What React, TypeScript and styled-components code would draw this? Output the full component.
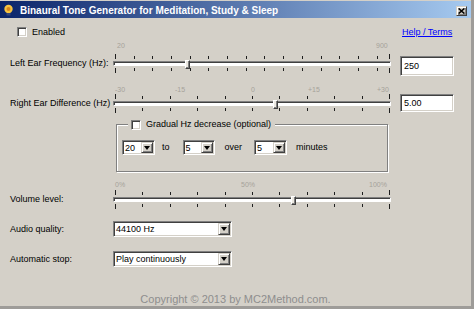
import styled, { createGlobalStyle, css } from "styled-components";

const FACE = "#d4d0c8";

const GlobalStyle = createGlobalStyle`
  html, body {
    margin: 0;
    padding: 0;
  }
  body {
    background: #9e9c99;
    font-family: "Liberation Sans", Arial, sans-serif;
    font-size: 9px;
    color: #000;
  }
  * {
    box-sizing: border-box;
  }
`;

const sunken = css`
  border: 1px solid;
  border-color: #808080 #ffffff #ffffff #808080;
  box-shadow: inset 1px 1px 0 #404040, inset -1px -1px 0 ${FACE};
`;

const raised = css`
  border: 1px solid;
  border-color: ${FACE} #404040 #404040 ${FACE};
  box-shadow: inset 1px 1px 0 #ffffff, inset -1px -1px 0 #808080;
`;

// distance in px between the first and the last tick of every slider
const TICK_SPAN = 274;
const TICK_START = 2;

type ScaleLabel = { text: string; x: number };

type SliderProps = {
  min: number;
  max: number;
  step: number;
  value: number;
  labels: ScaleLabel[];
  gap: number;
};

const Slider = ({ min, max, step, value, labels, gap }: SliderProps) => {
  const pos = (v: number) => TICK_START + ((v - min) / (max - min)) * TICK_SPAN;
  const ticks: number[] = [];
  for (let v = min; v < max - 0.001; v += step) ticks.push(v);
  ticks.push(max);

  return (
    <SliderBox>
      <Scale $gap={gap}>
        {labels.map((l) => (
          <ScaleText key={l.text} style={{ left: l.x }}>
            {l.text}
          </ScaleText>
        ))}
      </Scale>
      <SliderBody>
        {ticks.map((t, i) => (
          <Tick
            key={`top-${i}`}
            $side="top"
            $edge={i === 0 || i === ticks.length - 1}
            style={{ left: Math.round(pos(t)) }}
          />
        ))}
        <Channel />
        {ticks.map((t, i) => (
          <Tick
            key={`bottom-${i}`}
            $side="bottom"
            $edge={i === 0 || i === ticks.length - 1}
            style={{ left: Math.round(pos(t)) }}
          />
        ))}
        <Thumb style={{ left: Math.round(pos(value)) - 2 }} />
      </SliderBody>
    </SliderBox>
  );
};

const Combo = ({
  value,
  width,
  height,
}: {
  value: string;
  width: number;
  height: number;
}) => (
  <ComboBox $width={width} $height={height}>
    <ComboValue>{value}</ComboValue>
    <ComboButton>
      <Arrow />
    </ComboButton>
  </ComboBox>
);

const App = () => {
  return (
    <>
      <GlobalStyle />
      <Window>
        <TitleBar>
          <svg width="11" height="12" viewBox="0 0 11 12">
            <circle cx="5.5" cy="5" r="4.2" fill="#f5c342" />
            <circle cx="5.5" cy="5" r="2" fill="#d9861c" />
            <rect x="3.5" y="9" width="4" height="2.6" rx="0.6" fill="#34457a" />
          </svg>
          <TitleText>Binaural Tone Generator for Meditation, Study &amp; Sleep</TitleText>
          <CloseButton>
            <svg width="7" height="6" viewBox="0 0 7 6">
              <path d="M0.6 0.4 L6.4 5.6 M6.4 0.4 L0.6 5.6" stroke="#000" strokeWidth="1.5" />
            </svg>
          </CloseButton>
        </TitleBar>

        <Content>
          <Row $top={8} $align="center">
            <CheckLine>
              <CheckBox />
              <CheckText>Enabled</CheckText>
            </CheckLine>
            <HelpLink>Help / Terms</HelpLink>
          </Row>

          <Row $top={4}>
            <FieldLabel $offset={16}>Left Ear Frequency (Hz):</FieldLabel>
            <Slider
              min={20}
              max={900}
              step={60}
              value={250}
              gap={6}
              labels={[
                { text: "20", x: 4 },
                { text: "900", x: 263 },
              ]}
            />
            <TextBox $offset={14} $height={20}>
              250
            </TextBox>
          </Row>

          <Row $top={10}>
            <FieldLabel $offset={12}>Right Ear Difference (Hz)</FieldLabel>
            <Slider
              min={-30}
              max={30}
              step={6}
              value={5}
              gap={2}
              labels={[
                { text: "-30", x: 2 },
                { text: "-15", x: 62 },
                { text: "0", x: 138 },
                { text: "+15", x: 195 },
                { text: "+30", x: 264 },
              ]}
            />
            <TextBox $offset={8} $height={18}>
              5.00
            </TextBox>
          </Row>

          <Row $top={12}>
            <GroupBox>
              <Legend>
                <CheckBox />
                <CheckText>Gradual Hz decrease (optional)</CheckText>
              </Legend>
              <GroupLine>
                <Combo value="20" width={33} height={15} />
                <InlineText $left={7} $right={13}>
                  to
                </InlineText>
                <Combo value="5" width={32} height={15} />
                <InlineText $left={10} $right={12}>
                  over
                </InlineText>
                <Combo value="5" width={33} height={15} />
                <InlineText $left={9} $right={0}>
                  minutes
                </InlineText>
              </GroupLine>
            </GroupBox>
          </Row>

          <Row $top={9}>
            <FieldLabel $offset={13}>Volume level:</FieldLabel>
            <Slider
              min={0}
              max={100}
              step={10}
              value={65}
              gap={3}
              labels={[
                { text: "0%", x: 2 },
                { text: "50%", x: 128 },
                { text: "100%", x: 256 },
              ]}
            />
          </Row>

          <Row $top={14} $align="center">
            <FieldLabel>Audio quality:</FieldLabel>
            <ComboCell>
              <Combo value="44100 Hz" width={119} height={16} />
            </ComboCell>
          </Row>

          <Row $top={14} $align="center">
            <FieldLabel>Automatic stop:</FieldLabel>
            <ComboCell>
              <Combo value="Play continuously" width={119} height={16} />
            </ComboCell>
          </Row>

          <Copyright>Copyright © 2013 by MC2Method.com.</Copyright>
        </Content>
      </Window>
    </>
  );
};

export default App;

const Window = styled.div`
  width: 471px;
  height: 306px;
  display: flex;
  flex-direction: column;
  padding-top: 1px;
  background: ${FACE};
`;

const TitleBar = styled.div`
  height: 17px;
  display: flex;
  align-items: center;
  padding: 0 4px 0 3px;
  background: linear-gradient(to right, #0a246a, #a6caf0);
`;

const TitleText = styled.span`
  flex: 1;
  margin-left: 6px;
  padding-top: 1px;
  color: #ffffff;
  font-size: 10px;
  font-weight: bold;
  white-space: nowrap;
`;

const CloseButton = styled.div`
  width: 11px;
  height: 10px;
  margin-top: 2px;
  display: flex;
  align-items: center;
  justify-content: center;
  background: ${FACE};
  ${raised}
`;

const Content = styled.div`
  flex: 1;
  display: flex;
  flex-direction: column;
  padding-left: 10px;
`;

const Row = styled.div<{ $top: number; $align?: string }>`
  display: grid;
  grid-template-columns: 103px 279px 8px 54px;
  align-items: ${(p) => p.$align ?? "start"};
  margin-top: ${(p) => p.$top}px;
`;

const FieldLabel = styled.div<{ $offset?: number }>`
  grid-column: 1;
  margin-top: ${(p) => p.$offset ?? 0}px;
  line-height: 11px;
  white-space: nowrap;
`;

const CheckLine = styled.div`
  grid-column: 1 / span 2;
  display: flex;
  align-items: center;
  height: 12px;
  padding-left: 7px;
`;

const CheckBox = styled.span`
  width: 10px;
  height: 10px;
  flex-shrink: 0;
  background: #ffffff;
  ${sunken}
`;

const CheckText = styled.span`
  margin-left: 5px;
  line-height: 11px;
  white-space: nowrap;
`;

const HelpLink = styled.a`
  grid-column: 4;
  padding-left: 2px;
  margin-top: -1px;
  color: #0000ff;
  text-decoration: underline;
  white-space: nowrap;
  cursor: pointer;
`;

const TextBox = styled.div<{ $offset: number; $height: number }>`
  grid-column: 4;
  margin-top: ${(p) => p.$offset}px;
  height: ${(p) => p.$height}px;
  display: flex;
  align-items: center;
  padding-left: 3px;
  background: #ffffff;
  ${sunken}
`;

const SliderBox = styled.div`
  grid-column: 2;
  width: 279px;
`;

const Scale = styled.div<{ $gap: number }>`
  position: relative;
  height: 8px;
  margin-bottom: ${(p) => p.$gap}px;
`;

const ScaleText = styled.span`
  position: absolute;
  top: 0;
  font-size: 7px;
  line-height: 8px;
  color: #a6a29a;
  white-space: nowrap;
`;

const SliderBody = styled.div`
  position: relative;
  height: 15px;
`;

const Channel = styled.div`
  position: absolute;
  top: 5px;
  left: 0;
  width: 278px;
  height: 5px;
  background: #ffffff;
  border: 1px solid;
  border-color: #808080 #ffffff #ffffff #808080;
  box-shadow: inset 1px 1px 0 #404040;
`;

const Tick = styled.span<{ $side: "top" | "bottom"; $edge: boolean }>`
  position: absolute;
  width: 1px;
  top: ${(p) => (p.$side === "top" ? (p.$edge ? -2 : 0) : 12)}px;
  height: ${(p) => (p.$edge ? 5 : 3)}px;
  background: #1e1e1e;
`;

const Thumb = styled.span`
  position: absolute;
  top: 4px;
  width: 5px;
  height: 9px;
  background: #ece9e2;
  border: 1px solid;
  border-color: #ffffff #404040 #404040 #ffffff;
  box-shadow: inset -1px -1px 0 #808080;
`;

const GroupBox = styled.div`
  grid-column: 2;
  position: relative;
  width: 272px;
  height: 48px;
  margin-left: 3px;
  padding: 15px 0 0 5px;
  border: 1px solid #808080;
  box-shadow: inset 1px 1px 0 #ffffff, 1px 1px 0 #ffffff;
`;

const Legend = styled.div`
  position: absolute;
  top: -6px;
  left: 11px;
  height: 11px;
  display: flex;
  align-items: center;
  padding: 0 4px 0 3px;
  background: ${FACE};
`;

const GroupLine = styled.div`
  display: flex;
  align-items: center;
`;

const InlineText = styled.span<{ $left: number; $right: number }>`
  margin: -2px ${(p) => p.$right}px 0 ${(p) => p.$left}px;
  white-space: nowrap;
`;

const ComboCell = styled.div`
  grid-column: 2;
`;

const ComboBox = styled.div<{ $width: number; $height: number }>`
  width: ${(p) => p.$width}px;
  height: ${(p) => p.$height}px;
  display: flex;
  padding: 1px;
  background: #ffffff;
  ${sunken}
`;

const ComboValue = styled.span`
  flex: 1;
  display: flex;
  align-items: center;
  padding-left: 1px;
  overflow: hidden;
  white-space: nowrap;
`;

const ComboButton = styled.span`
  width: 12px;
  display: flex;
  align-items: center;
  justify-content: center;
  background: ${FACE};
  ${raised}
`;

const Arrow = styled.span`
  width: 0;
  height: 0;
  border-left: 3.5px solid transparent;
  border-right: 3.5px solid transparent;
  border-top: 4px solid #000000;
`;

const Copyright = styled.div`
  margin-top: auto;
  padding-right: 10px;
  text-align: center;
  font-size: 11px;
  line-height: 13px;
  color: #8e8e8e;
`;
